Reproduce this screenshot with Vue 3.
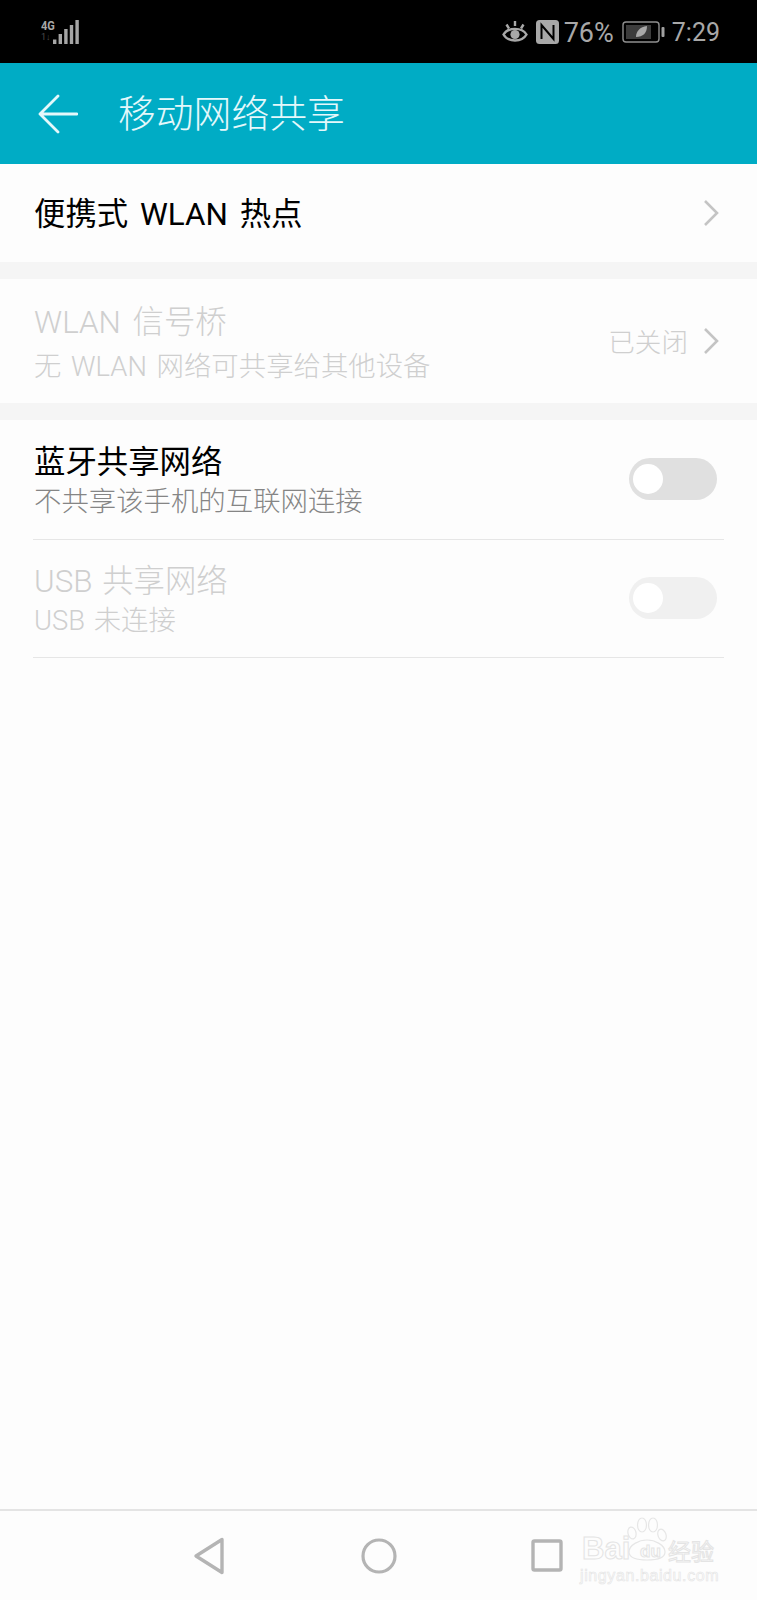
<script setup>
const chevronPoints = '2,2 14,14 2,26'
const signalBars = [
  { x: 0, h: 4.5 },
  { x: 5.6, h: 10 },
  { x: 11.2, h: 15 },
  { x: 16.8, h: 19 },
  { x: 22.4, h: 24 }
]
</script>

<template>
  <div class="page">
    <div class="status">
      <div class="signal">
        <div class="net">
          <span class="g4">4G</span>
          <span class="traffic">1↓</span>
        </div>
        <svg class="bars" width="26" height="24" viewBox="0 0 26 24">
          <rect v-for="b in signalBars" :key="b.x" :x="b.x" :y="24 - b.h" width="3.4" :height="b.h" fill="#a6a6a6" />
        </svg>
      </div>
      <div class="status-right">
        <svg width="26" height="24" viewBox="0 0 26 24" fill="none" stroke="#a8a8a8" stroke-width="2.4">
          <path d="M1.5 14.5 C6 7 20 7 24.5 14.5 C20 22.5 6 22.5 1.5 14.5 Z" />
          <circle cx="13" cy="14.5" r="4.6" fill="#a8a8a8" stroke="none" />
          <path d="M4.5 4.5 L7 8.5 M13 1 L13 6 M21.5 4.5 L19 8.5" />
        </svg>
        <svg class="nfc" width="23" height="24" viewBox="0 0 23 24">
          <rect x="0" y="0" width="23" height="24" rx="3.5" fill="#a8a8a8" />
          <path d="M5.5 19 V5 L17.5 19 V5" fill="none" stroke="#000" stroke-width="2" />
        </svg>
        <span class="pct">76%</span>
        <svg class="batt" width="43" height="22" viewBox="0 0 43 22">
          <rect x="1" y="1" width="36" height="20" rx="3" fill="none" stroke="#8f8f8f" stroke-width="1.4" />
          <rect x="4" y="4" width="25" height="14" fill="#3c3c3c" />
          <path d="M14 16 C14 10 18 6 25 5 C25 12 21 16 14 16 Z" fill="#a8a8a8" />
          <rect x="39.5" y="6" width="3" height="10" rx="1" fill="#a0a0a0" />
        </svg>
        <span class="time">7:29</span>
      </div>
    </div>

    <div class="appbar">
      <svg class="back" width="40" height="40" viewBox="0 0 40 40" fill="none" stroke="#e4f8fb" stroke-width="2.8" stroke-linecap="round" stroke-linejoin="round">
        <path d="M20 2 L2 20 L20 38 M2 20 H39" />
      </svg>
      <span class="title">移动网络共享</span>
    </div>

    <div class="row row-one">
      <span class="main strong">便携式 WLAN 热点</span>
      <svg class="chev" width="16" height="28" viewBox="0 0 16 28">
        <polyline :points="chevronPoints" />
      </svg>
    </div>
    <div class="gap"></div>
    <div class="row row-two">
      <div class="texts">
        <span class="main dim">WLAN 信号桥</span>
        <span class="sub dim">无 WLAN 网络可共享给其他设备</span>
      </div>
      <div class="value">
        <span>已关闭</span>
        <svg class="chev" width="16" height="28" viewBox="0 0 16 28">
          <polyline :points="chevronPoints" />
        </svg>
      </div>
    </div>
    <div class="gap"></div>
    <div class="row row-three">
      <div class="texts">
        <span class="main strong">蓝牙共享网络</span>
        <span class="sub">不共享该手机的互联网连接</span>
      </div>
      <div class="switch"><i></i></div>
    </div>
    <div class="row row-three row-four">
      <div class="texts tight">
        <span class="main dim">USB 共享网络</span>
        <span class="sub dim">USB 未连接</span>
      </div>
      <div class="switch off"><i></i></div>
    </div>

    <div class="spacer"></div>

    <div class="nav">
      <svg width="40" height="40" viewBox="0 0 40 40" fill="none" stroke="#b4b4b4" stroke-width="3.4" stroke-linejoin="round">
        <path d="M33 3.5 V36.5 L7 20 Z" />
      </svg>
      <svg class="home" width="40" height="40" viewBox="0 0 40 40" fill="none" stroke="#b4b4b4" stroke-width="3.2">
        <circle cx="20" cy="20" r="16" />
      </svg>
      <svg width="40" height="40" viewBox="0 0 40 40" fill="none" stroke="#b4b4b4" stroke-width="3.4" stroke-linejoin="round">
        <rect x="6" y="5" width="28" height="29" rx="1.5" />
      </svg>
      <div class="mark">
        <span class="bai">Bai</span>
        <svg class="paw" width="44" height="46" viewBox="0 0 44 46" fill="#fdfdfd" stroke="#e6e6e6" stroke-width="1.2">
          <ellipse cx="6" cy="17" rx="4" ry="6" transform="rotate(-15 6 17)" />
          <ellipse cx="16" cy="9" rx="4.5" ry="7" />
          <ellipse cx="27" cy="9" rx="4.5" ry="7" />
          <ellipse cx="36" cy="19" rx="4" ry="6" transform="rotate(-20 36 19)" />
          <path d="M3 36 C3 29 13 24 21 24 C29 24 39 29 39 36 C39 42 31 44 21 44 C11 44 3 42 3 36 Z" />
        </svg>
        <span class="du">du</span>
        <span class="jy">经验</span>
        <span class="url">jingyan.baidu.com</span>
      </div>
    </div>
  </div>
</template>

<style scoped>
.page {
  width: 757px;
  height: 1600px;
  display: flex;
  flex-direction: column;
  background: #fdfdfd;
  font-family: "Roboto", "Noto Sans CJK SC", "Noto Sans", sans-serif;
  overflow: hidden;
}
.status {
  height: 63px;
  flex: none;
  background: #000;
  display: flex;
  justify-content: space-between;
  align-items: center;
  padding: 0 37px 0 41px;
  box-sizing: border-box;
}
.signal {
  display: flex;
  align-items: flex-start;
  gap: 0;
}
.net {
  display: flex;
  flex-direction: column;
  width: 12px;
}
.g4 {
  font: bold 13px/12px "Roboto", sans-serif;
  color: #a8a8a8;
  transform: scaleX(0.85);
  transform-origin: left;
}
.traffic {
  font: 9px/11px "Roboto", sans-serif;
  color: #4c4c4c;
}
.status-right {
  display: flex;
  align-items: center;
  color: #a8a8a8;
  font: 27px/30px "Roboto", sans-serif;
}
.nfc { margin-left: 8px; }
.pct { margin-left: 5px; padding-top: 2px; }
.batt { margin-left: 8px; }
.time { margin-left: 7px; font-size: 25px; padding-top: 2px; }
.appbar {
  height: 101px;
  flex: none;
  background: #00acc5;
  display: flex;
  align-items: center;
  padding-left: 38px;
  box-sizing: border-box;
}
.title {
  margin-left: 40px;
  font-size: 37.8px;
  font-weight: 300;
  color: #e4f8fb;
  line-height: 50px;
}
.row {
  flex: none;
  display: flex;
  align-items: center;
  justify-content: space-between;
  padding: 0 38px 0 34px;
  box-sizing: border-box;
}
.row-one { height: 98px; }
.row-one .main { margin-top: 3px; }
.row-two { height: 124px; }
.row-two .sub { margin-top: 4px; }
.row-two .texts { margin-top: 6px; }
.gap {
  height: 17px;
  flex: none;
  background: #f5f5f5;
}
.texts {
  display: flex;
  flex-direction: column;
}
.main {
  font-size: 31.4px;
  line-height: 43px;
  font-weight: 300;
  color: #0c0c0c;
  word-spacing: 4px;
}
.strong {
  font-weight: 400;
  color: #000;
}
.sub {
  font-size: 27.4px;
  line-height: 39px;
  font-weight: 300;
  color: #858585;
  word-spacing: 3px;
}
.tight .main,
.tight .sub { word-spacing: 2px; }
.dim { color: #cfcfcf; }
.chev {
  fill: none;
  stroke: #c4c4c4;
  stroke-width: 2.6;
}
.value {
  display: flex;
  align-items: center;
  gap: 15px;
  color: #cfcfcf;
  font-size: 26.6px;
  font-weight: 300;
}
.value span { margin-top: -2px; }
.row-three {
  height: 120px;
  margin: 0 33px;
  padding: 0 7px 0 1px;
  border-bottom: 1.5px solid #e6e6e6;
}
.row-three .texts { margin-top: 3px; }
.row-three .sub { margin-top: -1px; }
.row-three .switch { margin-top: -2px; }
.row-four { height: 118px; }
.switch {
  width: 88px;
  height: 42px;
  border-radius: 21px;
  background: #e0e0e0;
  display: flex;
  align-items: center;
  padding-left: 4px;
  box-sizing: border-box;
}
.switch i {
  width: 30px;
  height: 30px;
  border-radius: 50%;
  background: #fff;
}
.switch.off { background: #f0f0f0; }
.spacer { flex: 1; }
.nav {
  position: relative;
  height: 91px;
  flex: none;
  border-top: 2px solid #e4e4e4;
  box-sizing: border-box;
  display: flex;
  align-items: center;
  gap: 129px;
  padding-left: 189px;
}
.home { margin: 0 -1px 0 1px; }
.mark {
  position: absolute;
  left: 580px;
  top: 6px;
  width: 140px;
  height: 78px;
  color: #fdfdfd;
  font-family: "Liberation Sans", sans-serif;
  -webkit-text-stroke: 1px #e4e4e4;
}
.mark span { position: absolute; white-space: nowrap; }
.bai { left: 2px; top: 19px; font-size: 31px; line-height: 26px; font-weight: bold; }
.paw { position: absolute; left: 46px; top: -1px; }
.du { left: 60px; top: 25px; font-size: 17px; line-height: 20px; font-weight: bold; }
.jy { left: 88px; top: 17px; font-size: 23px; line-height: 32px; font-family: "Noto Sans CJK SC", sans-serif; }
.url { left: 0; top: 50px; font-size: 16px; line-height: 18px; letter-spacing: 0.6px; -webkit-text-stroke: 0.6px #e4e4e4; }
</style>
